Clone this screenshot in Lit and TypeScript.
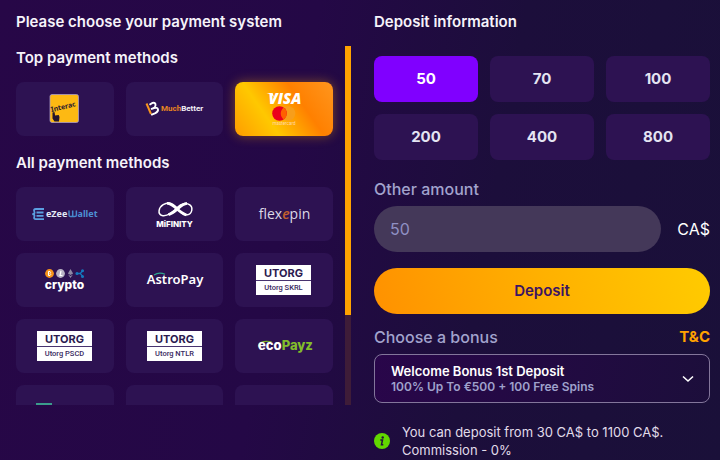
import { LitElement, html, svg, css } from "lit";
import { customElement, state } from "lit/decorators.js";
import { classMap } from "lit/directives/class-map.js";

const interac = svg`
  <rect x="34" y="12.500" width="28.500" height="28" rx="2" fill="#fdb913" stroke="#a99ac4" stroke-width="0.8"/>
  <text class="noto" x="35.500" y="30" font-size="7" font-weight="700" fill="#2b1a2e" transform="rotate(-13 35.500 30)">Interac</text>
  <path d="M36.500 30.500l2-.4.600 3.400 3.600-.5.800 2-.5 4.500h-4.500l-2-3z" fill="#24162e"/>`;

const muchBetter = svg`
  <path d="M20.500 21.500l4.500 10.500" stroke="#f7941d" stroke-width="2" fill="none"/>
  <path d="M23.500 22.800l3-1.900c3-.9 4.500 2.400 1.400 5.200 4.700-1.800 5.600 2.900 1.500 5l-4.200 1.700M25 27.200l3-1.200" stroke="#fff" stroke-width="1.900" fill="none"/>
  <text class="roboto" x="35" y="29" font-size="8" font-weight="700"><tspan fill="#e8851f">Much</tspan><tspan fill="#f1eef6">Better</tspan></text>`;

const visa = svg`
  <text class="open" x="50" y="22" font-size="15" font-weight="800" font-style="italic" text-anchor="middle" fill="#fff">VISA</text>
  <path d="M31.500 11h6l1.500 4c-2-2-4-3.200-7.500-4z" fill="#fff"/>
  <circle cx="53" cy="31.500" r="7.300" fill="#f79e1b"/>
  <circle cx="44.500" cy="31.500" r="7.300" fill="#eb001b"/>
  <path d="M48.750 25.600a7.300 7.300 0 0 1 0 11.800a7.300 7.300 0 0 1 0-11.800" fill="#ff5f00"/>
  <text class="roboto" x="49" y="42.500" font-size="4.500" text-anchor="middle" fill="#ffd9a8">mastercard</text>`;

const ezee = svg`
  <path d="M28 22h-8q-2.800 0-1.700 2.500t-2 2.600q2.900.2 2 2.600t1.700 2.500H28M20.500 25.500H27.500M20.500 28.800H27.500" fill="none" stroke="#5b9fe0" stroke-width="1.800"/>
  <text class="noto" x="30" y="30" font-size="9" font-weight="700" fill="#e4eaf6">eZee</text>
  <path d="M53 23.600v4.300q0 1.600 1.700 1.600h4q1.700 0 1.700-1.600v-4.300M56.700 23.600v5.600" stroke="#4687cb" stroke-width="1.500" fill="none"/>
  <text class="noto" x="61.500" y="30" font-size="9" font-weight="700" fill="#4d90d3">allet</text>`;

const mifinity = svg`
  <path d="M36 28.500c-4.500-1.200-3.700-7.800 1.200-10.800 4.500-2.800 8.800-2.400 13.300 2.800 4.500 5.200 6.500 7.700 10.800 7.200 4.800-.7 6.100-7.100 2.500-9.800-3.400-2.500-8.500-1.600-12.300 2.400-4.500 4.800-10 9.600-15.500 8.200z" stroke="#fff" stroke-width="1.500" fill="none"/>
  <path d="M41 16.300c7-.3 11 9.500 19.500 11.700M61 16.300c-7 .7-10 8.700-18.500 11.400" stroke="#fff" stroke-width="2.800" fill="none"/>
  <text class="inter" x="48.500" y="40" font-size="8" font-weight="800" text-anchor="middle" fill="#fff">MiFINITY</text>`;

const flexepin = svg`
  <text class="open" x="49.500" y="31.500" font-size="14" font-weight="400" text-anchor="middle" fill="#dcd8e6">flex<tspan fill="#c4602c" font-style="italic" font-weight="600">e</tspan>pin</text>`;

const crypto = svg`
  <circle cx="33.500" cy="20.500" r="4.400" fill="#f7931a"/>
  <path d="M32.500 18.500h1.500q1.200 1 0 2q1.500 1 0 2h-1.500z" fill="none" stroke="#fff" stroke-width="1"/>
  <circle cx="44.500" cy="20.500" r="4.400" fill="#b8b3c4"/>
  <path d="M45 18l-1 4.500h2.500" fill="none" stroke="#fff" stroke-width="1.200"/>
  <path d="M54.500 16l2.600 4.400-2.600 1.700-2.600-1.700zM54.500 25l-2.500-3.500 2.500 1.400 2.500-1.400z" fill="#8e88a3"/>
  <path d="M60.500 20.500H64M66.500 17.800l-2.300 2.700 2.300 2.700" stroke="#1479be" stroke-width="1.300" fill="none"/>
  <g fill="#1479be"><circle cx="61" cy="20.500" r="1.500"/><circle cx="66.500" cy="17.800" r="1.500"/><circle cx="66.500" cy="23.400" r="1.500"/></g>
  <text class="inter" x="48.500" y="35.500" font-size="12" font-weight="800" text-anchor="middle" fill="#fff">crypto</text>`;

const astroPay = svg`
  <path d="M28 22q5-3.500 11-.8" stroke="#2fa58d" stroke-width="1.200" fill="none"/>
  <text class="noto" x="49" y="31" font-size="13" font-weight="600" text-anchor="middle" fill="#fff">AstroPay</text>`;

const utorg = (name: string) => svg`
  <rect x="21" y="12" width="55" height="30" fill="#fff"/>
  <path d="M21 27.500h55" stroke="#48336f" stroke-width="1"/>
  <text class="inter" x="48.500" y="24" font-size="11" font-weight="700" text-anchor="middle" fill="#2b1a4f">UTORG</text>
  <text class="roboto" x="48.500" y="37" font-size="7.500" font-weight="500" text-anchor="middle" fill="#382860">Utorg ${name}</text>`;

const ecoPayz = svg`
  <path d="M23.500 29q-2.500-5.500 5-7 5.500-.8 9.500 1.200-5.500-1-9.500.2-5 1.500-5 5.600z" fill="#7dba28"/>
  <text class="inter" x="50.500" y="30.500" font-size="13" font-weight="800" text-anchor="middle" fill="#fff">eco<tspan fill="#82bc2b">Payz</tspan></text>`;

const tealMark = svg`<path d="M20 18h16v16H20z" fill="#3b9c8c"/>`;

interface Method {
  name: string;
  art: unknown;
}

const TOP: Method[] = [
  { name: "Interac", art: interac },
  { name: "MuchBetter", art: muchBetter },
  { name: "Visa and Mastercard", art: visa },
];

const ALL: Method[] = [
  { name: "eZeeWallet", art: ezee },
  { name: "MiFinity", art: mifinity },
  { name: "Flexepin", art: flexepin },
  { name: "Crypto", art: crypto },
  { name: "AstroPay", art: astroPay },
  { name: "Utorg SKRL", art: utorg("SKRL") },
  { name: "Utorg PSCD", art: utorg("PSCD") },
  { name: "Utorg NTLR", art: utorg("NTLR") },
  { name: "ecoPayz", art: ecoPayz },
  { name: "Method 10", art: tealMark },
  { name: "Method 11", art: "" },
  { name: "Method 12", art: "" },
];

@customElement("app-root")
export class AppRoot extends LitElement {
  @state() method = "Visa and Mastercard";
  @state() amount = 50;

  static styles = css`
    :host {
      display: block;
      box-sizing: border-box;
      min-height: 100vh;
      background: linear-gradient(100deg, #270747 0%, #240846 40%, #1c0e3b 66%, #1a1039 100%);
      color: #fff;
      font-family: Inter, "Open Sans", sans-serif;
      font-size: 15px;
      line-height: 24px;
    }
    * {
      box-sizing: border-box;
    }
    button, input, select {
      font: inherit;
      color: inherit;
      border: 0;
      margin: 0;
      padding: 0;
    }
    button, select {
      cursor: pointer;
    }
    .page {
      display: grid;
      grid-template-columns: 335fr 336fr;
      column-gap: 23px;
      padding: 10px 10px 0 16px;
    }
    h1, h2, h3 {
      margin: 0;
      font-size: 15px;
      font-weight: 600;
      color: #f6f3fa;
    }
    .scroller {
      display: flex;
      margin-top: 12px;
      max-height: 359px;
    }
    .list {
      flex: 1;
      overflow: hidden;
      margin-left: -16px;
      padding: 0 12px 0 16px;
    }
    .track {
      width: 6px;
      background: #3e1c38;
    }
    .thumb {
      height: 75%;
      background: #ffa200;
    }
    .tiles {
      display: grid;
      grid-template-columns: repeat(3, 1fr);
      gap: 12px;
      margin: 12px 0 15px;
    }
    .tile {
      display: flex;
      justify-content: center;
      height: 54px;
      border-radius: 8px;
      background: #2d1252;
      overflow: hidden;
    }
    .tile.on {
      background: linear-gradient(55deg, #ff9c00 0%, #ffc800 33%, #ff8000 66%, #ff961e 100%);
      box-shadow: 0 0 12px rgba(255, 170, 0, 0.4);
    }
    .tile svg {
      flex: none;
    }
    .noto { font-family: "Noto Sans", sans-serif; }
    .roboto { font-family: Roboto, sans-serif; }
    .open { font-family: "Open Sans", sans-serif; }
    .inter { font-family: Inter, sans-serif; }

    .amounts {
      display: grid;
      grid-template-columns: repeat(3, 1fr);
      gap: 12px;
      margin: 22px 0 17px;
    }
    .amount {
      height: 46px;
      border-radius: 8px;
      background: #2d1252;
      color: #e4e4f2;
      font-weight: 700;
    }
    .amount.on {
      background: #8000ff;
      color: #fff;
    }
    .label {
      display: block;
      color: #a2a3cd;
      font-size: 16px;
      font-weight: 500;
    }
    .row {
      display: flex;
      align-items: center;
      justify-content: space-between;
    }
    .entry {
      gap: 16px;
      margin: 5px 0 16px;
    }
    .field {
      flex: 1;
      min-width: 0;
      height: 46px;
      padding: 0 16px;
      border-radius: 23px;
      background: #443859;
      color: #9090c4;
      font-size: 16px;
      outline: none;
    }
    .currency {
      font-size: 16px;
    }
    .deposit {
      width: 100%;
      height: 46px;
      border-radius: 23px;
      background: linear-gradient(75deg, #ff9100, #ffb000 50%, #ffcb00);
      color: #3b1463;
      font-weight: 600;
      display: block;
      margin-bottom: 11px;
    }
    .terms {
      color: #ffa200;
      font-weight: 700;
      text-decoration: none;
    }
    .bonus {
      display: grid;
      grid-template-columns: 1fr auto;
      margin-top: 5px;
      line-height: 16px;
      font-size: 13px;
    }
    .bonus select {
      grid-area: 1 / 1 / 2 / 3;
      appearance: none;
      height: 49px;
      padding: 0 40px 16px 16px;
      border: 1px solid #83769b;
      border-radius: 8px;
      background: linear-gradient(100deg, #29064a, #1c0e3b);
      color: #fff;
      font-weight: 600;
    }
    .detail {
      grid-area: 1 / 1 / 2 / 2;
      align-self: end;
      padding: 0 0 8px 17px;
      color: #9fa1cc;
      font-size: 12px;
      font-weight: 600;
      pointer-events: none;
    }
    .chevron {
      grid-area: 1 / 2 / 2 / 3;
      align-self: center;
      margin-right: 16px;
      pointer-events: none;
    }
    .note {
      display: flex;
      align-items: center;
      gap: 12px;
      margin: 20px 0 0;
      color: #e1dcea;
      font-size: 13px;
      line-height: 18px;
    }
    .note svg {
      flex: none;
    }
  `;

  private tile(m: Method) {
    const on = this.method === m.name;
    return html`<button
      type="button"
      class=${classMap({ tile: true, on })}
      aria-label=${m.name}
      aria-pressed=${on ? "true" : "false"}
      @click=${() => (this.method = m.name)}
    ><svg width="98" height="54" viewBox="0 0 98 54" aria-hidden="true">${m.art}</svg></button>`;
  }

  render() {
    return html`
      <main class="page">
        <section>
          <h1>Please choose your payment system</h1>
          <div class="scroller">
            <div class="list">
              <h2>Top payment methods</h2>
              <div class="tiles">${TOP.map((m) => this.tile(m))}</div>
              <h2>All payment methods</h2>
              <div class="tiles">${ALL.map((m) => this.tile(m))}</div>
            </div>
            <div class="track"><div class="thumb"></div></div>
          </div>
        </section>
        <section>
          <h1>Deposit information</h1>
          <div class="amounts">
            ${[50, 70, 100, 200, 400, 800].map(
              (n) => html`<button
                type="button"
                class=${classMap({ amount: true, on: n === this.amount })}
                @click=${() => (this.amount = n)}
              >${n}</button>`
            )}
          </div>
          <label class="label" for="other">Other amount</label>
          <div class="row entry">
            <input class="field" id="other" inputmode="numeric" .value=${String(this.amount)} />
            <span class="currency">CA$</span>
          </div>
          <button type="button" class="deposit">Deposit</button>
          <div class="row">
            <label class="label" for="bonus">Choose a bonus</label>
            <a class="terms" href="#terms">T&amp;C</a>
          </div>
          <div class="bonus">
            <select id="bonus" aria-describedby="detail">
              <option>Welcome Bonus 1st Deposit</option>
            </select>
            <span class="detail" id="detail">100% Up To €500 + 100 Free Spins</span>
            <svg class="chevron" width="12" height="8" viewBox="0 0 12 8" aria-hidden="true">
              <path d="M1 1.500l5 4.500 5-4.500" fill="none" stroke="#fff" stroke-width="1.600"/>
            </svg>
          </div>
          <p class="note">
            <svg width="16" height="16" viewBox="0 0 16 16" aria-hidden="true">
              <circle cx="8" cy="8" r="8" fill="#62d800"/>
              <circle cx="8.700" cy="4.500" r="1.200" fill="#22153a"/>
              <path d="M6.300 7h2.200l-1 4.700h1.800" fill="none" stroke="#22153a" stroke-width="1.500"/>
            </svg>
            <span>You can deposit from 30 CA$ to 1100 CA$.<br />Commission - 0%</span>
          </p>
        </section>
      </main>
    `;
  }
}
